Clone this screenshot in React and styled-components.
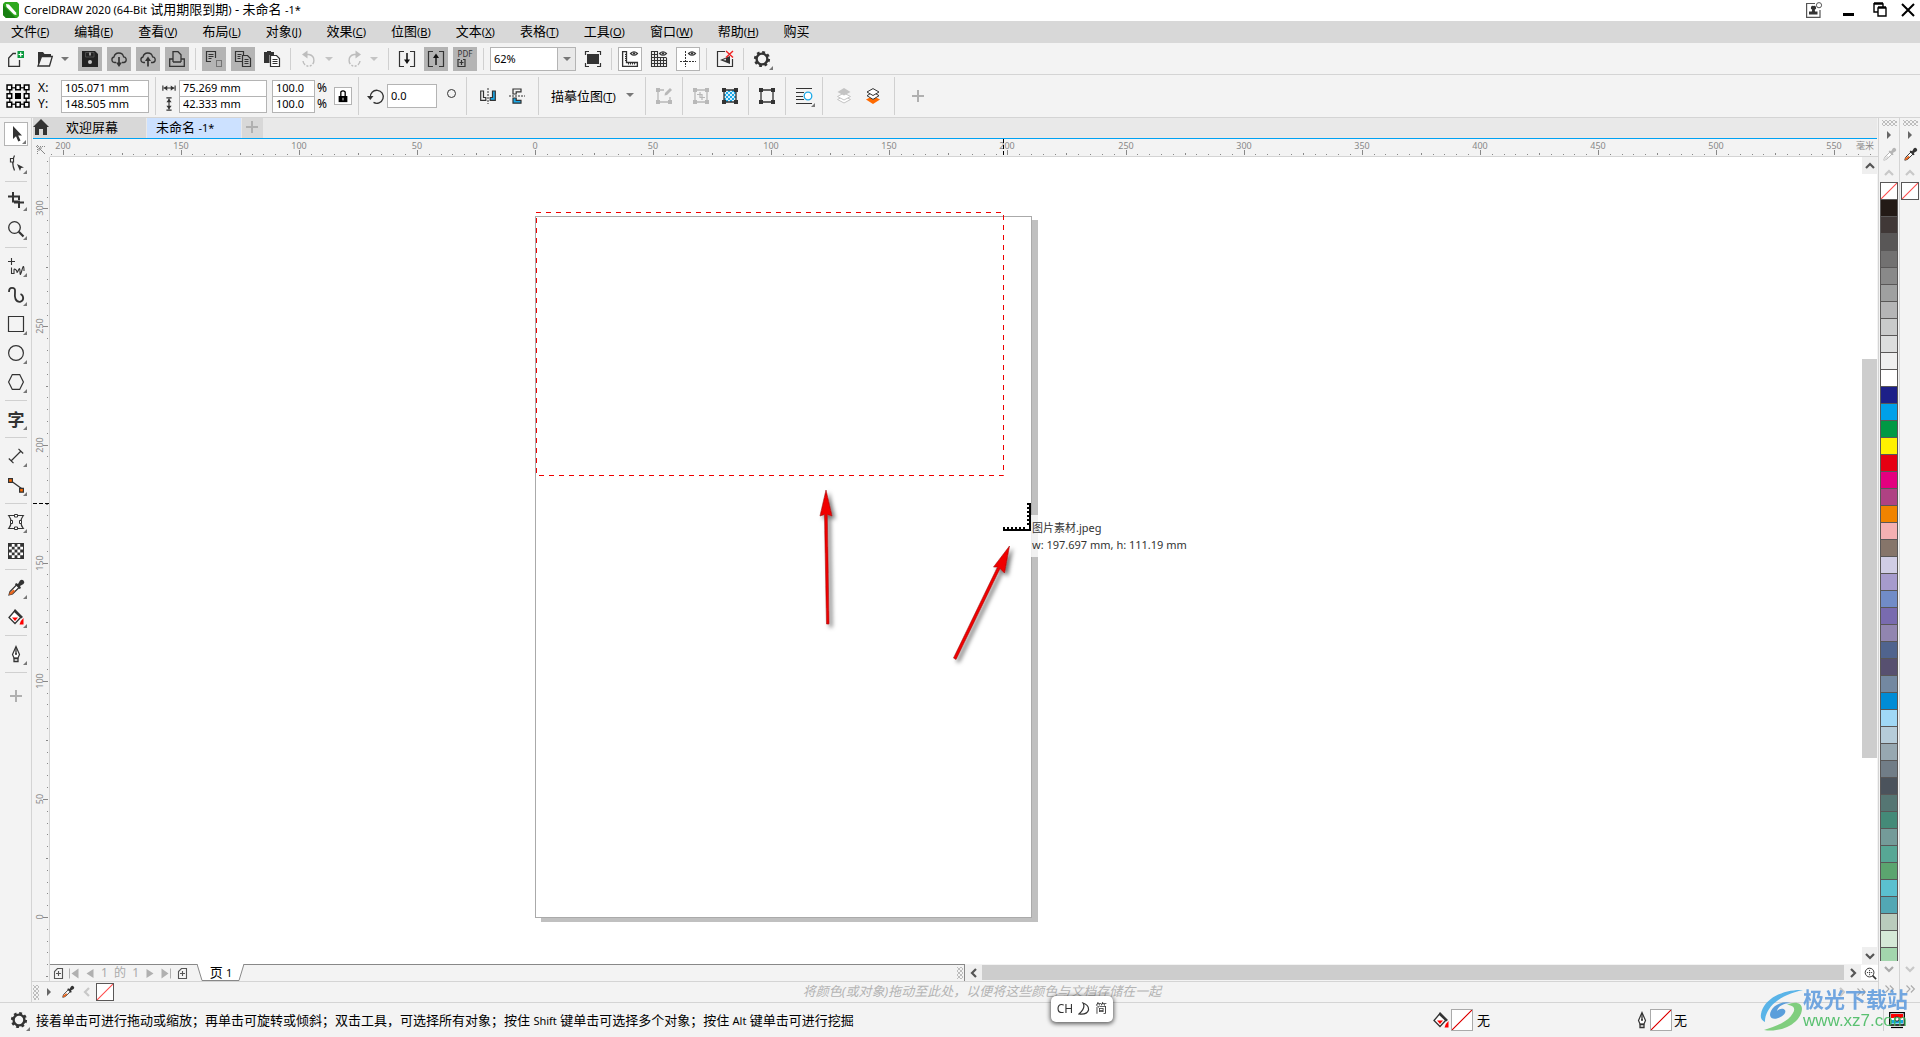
import React, {useState} from 'react';
import styled, {createGlobalStyle, css} from 'styled-components';

const GlobalStyle = createGlobalStyle`
    * { box-sizing: border-box; }
    body { margin: 0; overflow: hidden; }
    body, button, input, select {
        font-family: "Noto Sans", "Noto Sans CJK SC", sans-serif;
        font-size: 13px;
        color: #000;
    }
    button { padding: 0; border: 0; background: none; }
    svg { display: block; flex: none; }
`;

const LINE = '#d4d4d4';
const INK = '#333';
const SCALE = 2.3622; // screen pixels for one millimetre

/* ---------- icons ---------- */

const S = (props) => <g fill="none" stroke={INK} strokeWidth="1.5" {...props}/>;

const box = (color) => (
    <>
        <path d="M2 2H14V14H2Z" fill="none" stroke={color} strokeWidth="1.3"/>
        <path d="M0 0H4V4H0ZM12 0H16V4H12ZM0 12H4V16H0ZM12 12H16V16H12Z" fill={color}/>
    </>
);

const cloud = <path d="M5 11.5H3.5A2.8 2.8 0 0 1 3 6A4.9 4.9 0 0 1 12.6 5.8A2.9 2.9 0 0 1 13 11.5H11" fill="none" stroke={INK} strokeWidth="1.3"/>;

const checker = (cells, size, color) => {
    const out = [];
    for (let r = 0; r < cells; r++) {
        for (let c = 0; c < cells; c++) {
            if ((r + c) % 2 === 0) out.push(`M${1 + c * size} ${1 + r * size}h${size}v${size}h-${size}z`);
        }
    }
    return <path d={out.join('')} fill={color}/>;
};

const dropper = (ink, tip) => (
    <>
        <path d="M9 4.5L2 11.5L1 15L4.5 14L11.5 7" fill="#fff" stroke={ink} strokeWidth="1.2"/>
        <path d="M5.5 9.5L1.8 12.5L1 15L3.8 14.2L7 11Z" fill={tip}/>
        <path d="M8 3L10 4L12 .5A2.4 2.4 0 0 1 15.5 4L12 6L13 8L11.5 9L7 4.5Z" fill={ink}/>
    </>
);

const gear = (
    <>
        <circle cx="8" cy="8" r="5.4" fill="none" stroke={INK} strokeWidth="2.4"/>
        <circle cx="8" cy="8" r="7" fill="none" stroke={INK} strokeWidth="2.2" strokeDasharray="2.8 2.7"/>
    </>
);

const eye = (
    <>
        <path d="M8.5 2.5Q12 -1 15.5 2.5Q12 6 8.5 2.5Z" fill="none" stroke={INK} strokeWidth="1.1"/>
        <circle cx="12" cy="2.5" r="1.2" fill={INK}/>
    </>
);

const bucket = (
    <>
        <path d="M7 1.5L13 8L7 14.5L1 8.5Z" fill="#fff" stroke={INK} strokeWidth="1.3"/>
        <path d="M7 0L15 8L13 9.5L5.5 2.5Z" fill={INK}/>
        <path d="M4 8.5H10L7 12Z" fill="#f00"/>
        <path d="M15.5 9V15.5H11.5Q12 12 15.5 9Z" fill="#f00"/>
    </>
);

const nib = (
    <>
        <path d="M8 .5L4.5 8.5L6 12H10L11.5 8.5Z" fill="#fff" stroke={INK} strokeWidth="1.2"/>
        <path d="M8 1V8M6 12.5H10V15.5H6Z" fill="none" stroke={INK} strokeWidth="1.3"/>
        <circle cx="8" cy="8" r="1" fill={INK}/>
    </>
);

const pageStack = (
    <S strokeWidth="1.2">
        <path d="M7 10.5H.5V.5H8.5V4"/>
        <path d="M7.5 4.5H12.5L15.5 7.5V15.5H7.5Z" fill="#b4b4b4"/>
        <path d="M2.5 3.5H6.5M2.5 5.5H5.5M2.5 7.5H5.5M9.5 8.5H13.5M9.5 10.5H13.5M9.5 12.5H13.5" strokeWidth="1"/>
    </S>
);

const ICONS = {
    newDoc: (
        <>
            <S strokeWidth="1.3"><path d="M8 2.5H5L.7 7V15.3H11.5V9"/></S>
            <path d="M9.5 0H16V7H9.5Z" fill="#0b9a3f"/>
            <path d="M12.7 1.2V5.8M10.5 3.5H15" stroke="#fff" strokeWidth="1.2"/>
        </>
    ),
    open: (
        <>
            <path d="M1 15V1H6L7.5 3H14V5.5H4.5Z" fill={INK}/>
            <path d="M1 15L4.5 5.5H15.3L12.5 15Z" fill="#f3f3f3" stroke={INK} strokeWidth="1.3"/>
        </>
    ),
    save: (
        <>
            <path d="M0 0H13L16 3V16H0Z" fill="#222"/>
            <path d="M3.5 1.5H12V6H3.5Z" fill="#222" stroke="#555" strokeWidth=".8"/>
            <path d="M8 1.5V4.5" stroke="#ccc" strokeWidth="1.4"/>
            <circle cx="8" cy="11" r="2" fill="#c6c6c6"/>
        </>
    ),
    cloudDown: <>{cloud}<path d="M8 6V14" stroke={INK} strokeWidth="1.7"/><path d="M5 11.5H11L8 16Z" fill={INK}/></>,
    cloudUp: <>{cloud}<path d="M8 8V15.5" stroke={INK} strokeWidth="1.7"/><path d="M5 10H11L8 5.5Z" fill={INK}/></>,
    print: <S strokeWidth="1.3"><path d="M4 11V.7H9L12 3.7V11M4 8H.7V15.3H15.3V8H12M4 11H12"/></S>,
    cut: (
        <>
            <S strokeWidth="1.2"><path d="M5 10.5H.5V.5H9.5V7"/></S>
            <path d="M2.5 3.5H7.5M2.5 5.5H7.5M2.5 7.5H5.5" stroke={INK}/>
            <path d="M10.5 9.5H15.5V15.5H10.5Z" fill="none" stroke={INK} strokeDasharray="1 1"/>
        </>
    ),
    copy: pageStack,
    paste: (
        <>
            <path d="M0 1H3V0H7V1H10V4H5.5V12H0Z" fill={INK}/>
            <S strokeWidth="1.2"><path d="M6.5 4.5H12.5L15.5 7.5V15.5H6.5Z" fill="#fff"/></S>
            <path d="M8.5 8.5H13.5M8.5 10.5H13.5M8.5 12.5H13.5" stroke={INK}/>
        </>
    ),
    undo: <><path d="M4 3.5H8A6 6 0 0 1 8 15.3A6 6 0 0 1 2 10" fill="none" stroke="#bdbdbd" strokeWidth="1.4" strokeDasharray="16 1.5 2 1.5 2 1.5"/><path d="M1 3.5L6.5 -.5V7.5Z" fill="#bdbdbd"/></>,
    redo: <><path d="M12 3.5H8A6 6 0 0 0 8 15.3A6 6 0 0 0 14 10" fill="none" stroke="#bdbdbd" strokeWidth="1.4" strokeDasharray="16 1.5 2 1.5 2 1.5"/><path d="M15 3.5L9.5 -.5V7.5Z" fill="#bdbdbd"/></>,
    importFile: <><S strokeWidth="1.2"><path d="M5 .5H.5V15.5H5M11 .5H15.5V15.5H11"/><path d="M8 2V10" strokeWidth="1.8"/></S><path d="M5 8.5H11L8 13Z" fill="#111"/></>,
    exportFile: <><S strokeWidth="1.2"><path d="M5 .5H.5V15.5H5M11 .5H15.5V15.5H11"/><path d="M8 6V14" strokeWidth="1.8"/></S><path d="M5 7H11L8 2.5Z" fill="#111"/></>,
    pdf: (
        <>
            <text x="8" y="6" fontSize="8" textAnchor="middle" fill={INK}>PDF</text>
            <S strokeWidth="1.2"><path d="M3 8.5H1V15.5H8V8.5H6M4.5 9V14M2.5 11.5H6.5"/></S>
        </>
    ),
    fullScreen: <><path d="M2 3H14V13H2Z" fill={INK}/><S strokeWidth="1.2"><path d="M.5 4V.5H4M12 .5H15.5V4M.5 12V15.5H4M12 15.5H15.5V12"/></S></>,
    rulers: <>{eye}<S strokeWidth="1.3"><path d="M.6 .6H4.5V11.5H15.4V15.4H.6Z"/><path d="M3 3.5H5M3 5.5H5M3 7.5H5M3 9.5H5M6.5 13.5V11.5M8.5 13.5V11.5M10.5 13.5V11.5M12.5 13.5V11.5" strokeWidth="1"/></S></>,
    grid: <>{eye}<S strokeWidth="1.1"><path d="M7 .5H.5V15.5H15.5V7M.5 3.5H7M.5 6.5H15.5M.5 9.5H15.5M.5 12.5H15.5M3.5 .5V15.5M6.5 .5V15.5M9.5 6V15.5M12.5 6V15.5"/></S></>,
    guides: <>{eye}<path d="M5.5 0V16M0 10.5H16" stroke={INK} strokeDasharray="2 1" fill="none"/></>,
    snapOff: (
        <>
            <S strokeWidth="1.2"><path d="M8 .5H.5V15.5H15.5V8"/></S>
            <path d="M13 5L3 9L13 13Z" fill={INK}/>
            <path d="M6 9L9 7.5V9.5Z" fill="#ddd"/>
            <path d="M9 0L16 6.5M16 0L9 6.5" stroke="#f02020" strokeWidth="1.4"/>
        </>
    ),
    gear,
    origin: (
        <S strokeWidth="1">
            <path d="M2.5 2.5H13.5V13.5H2.5Z"/>
            <path d="M.7 .7H3.8V3.8H.7ZM6.5 .7H9.5V3.8H6.5ZM12.2 .7H15.3V3.8H12.2ZM.7 6.5H3.8V9.5H.7ZM12.2 6.5H15.3V9.5H12.2ZM.7 12.2H3.8V15.3H.7ZM6.5 12.2H9.5V15.3H6.5ZM12.2 12.2H15.3V15.3H12.2Z" fill="#fff" stroke="#000"/>
            <path d="M6 6H10V10H6Z" fill="#000" stroke="none"/>
        </S>
    ),
    width: <><path d="M1 5V11M15 5V11M2 8H14" stroke={INK} strokeWidth="1.3"/><path d="M2 8L6 5V11ZM14 8L10 5V11Z" fill={INK}/></>,
    height: <><path d="M5 1H11M5 15H11M8 2V14" stroke={INK} strokeWidth="1.3"/><path d="M8 2L5 6H11ZM8 14L5 10H11Z" fill={INK}/></>,
    lock: <><path d="M3 8H13V15H3Z"/><path d="M5.5 8V3.5Q8 .8 10.5 3.5V8" fill="none" stroke="#000" strokeWidth="1.5"/><path d="M8 10V13" stroke="#fff"/></>,
    rotate: <><S strokeWidth="1.3"><path d="M2.3 9.5A6.5 6.5 0 1 1 5.5 14.4"/></S><path d="M-1 8H5.5L2.3 12Z" fill={INK}/></>,
    mirrorH: (
        <>
            <path d="M.7 3H3.5V9.5H5.8V12.3H.7Z" fill="none" stroke={INK} strokeWidth="1.2"/>
            <path d="M15.3 3H12.5V9.5H10.2V12.3H15.3Z" fill="#1ba9e8" stroke={INK} strokeWidth="1.2"/>
            <path d="M8 0V16" stroke={INK} strokeDasharray="2 1"/>
        </>
    ),
    mirrorV: (
        <>
            <path d="M4 6V1H12V3.8H7.2V6Z" fill="none" stroke={INK} strokeWidth="1.2"/>
            <path d="M4 10V15.2H12V12.4H7.2V10Z" fill="#1ba9e8" stroke={INK} strokeWidth="1.2"/>
            <path d="M0 8H16" stroke={INK} strokeDasharray="2 1"/>
        </>
    ),
    editBitmap: <><path d="M8 2H2V14H14V9" fill="none" stroke="#b8b8b8" strokeWidth="1.3"/><path d="M0 0H4V4H0ZM0 12H4V16H0ZM12 12H16V16H12Z" fill="#b8b8b8"/><path d="M14 0L16 2L11 7L8.5 7.5L9 5Z" fill="#b8b8b8"/></>,
    cropBitmap: <>{box('#b8b8b8')}<path d="M7 4V9.5H12M4 6.5H9V12" fill="none" stroke="#b8b8b8" strokeWidth="1.2"/></>,
    fillBox: (
        <>
            <path d="M2 2H14V14H2Z" fill="#d8f0fc"/>
            <g transform="translate(1 1)">{checker(6, 2, '#1ba9e8')}</g>
            {box(INK)}
        </>
    ),
    wrapBox: <>{box(INK)}</>,
    textWrap: <><path d="M0 .5H16M0 4.5H8M0 8.5H7M0 11.5H8M0 15.5H16" stroke={INK} strokeWidth="1.2"/><circle cx="12" cy="8" r="3.8" fill="#fff" stroke="#1ba9e8" strokeWidth="1.3"/></>,
    toFront: <><path d="M8 8L1.5 11.5L8 15L14.5 11.5Z" fill="#fff" stroke="#c4c4c4"/><path d="M8 5L1.5 8.5L8 12L14.5 8.5Z" fill="#fff" stroke="#c4c4c4"/><path d="M8 0L1.5 4L8 7.5L14.5 4Z" fill="#c4c4c4"/></>,
    toBack: <><path d="M8 8L1 11.5L8 16L15 11.5Z" fill="#ff6a00"/><path d="M8 4L2 7.7L8 11.4L14 7.7Z" fill="#fff" stroke={INK}/><path d="M8 .6L2 4L8 7.5L14 4Z" fill="#fff" stroke={INK}/></>,
    plus: <path d="M8 2V14M2 8H14" stroke="#b0b0b0" strokeWidth="2"/>,
    pick: <path d="M5 0V13L8 10.2L10.3 15.5L12.5 14.5L10.2 9.5H14Z" fill={INK}/>,
    shape: (
        <>
            <S><path d="M6.5 .5Q3 7 6.5 15.5" strokeWidth="1.2"/><path d="M2.5 3.5H5.5V7H2.5Z" fill="#fff" strokeWidth="1.2"/></S>
            <path d="M9 9L16 12.5L13 13L12 16Z" fill={INK}/>
        </>
    ),
    crop: <S strokeWidth="2"><path d="M5 0V9.5H11V16M0 4.5H11V8M6 10.5H16"/></S>,
    zoom: <><circle cx="6.5" cy="6.5" r="5.8" fill="none" stroke={INK} strokeWidth="1.3"/><path d="M10.8 10.8L15.5 15.5" stroke={INK} strokeWidth="2.2"/></>,
    freehand: <S strokeWidth="1"><path d="M3.5 0V7M0 3.5H7M3.5 9.5V15.5H6V12Q6 10.5 7.5 11.5T9 14T10.5 12T12 14T14 12T16 13" strokeWidth="1.1"/></S>,
    artistic: <S strokeWidth="1.8"><path d="M1 5Q1 .8 4 .8Q7.5 .8 7 5T7.5 12Q9 15 12 14.8Q15.2 14 15.2 11Q15 8 12.5 7"/></S>,
    rect: <S strokeWidth="1.2"><path d="M.5 .5H15.5V15.5H.5Z"/></S>,
    ellipse: <S strokeWidth="1.2"><circle cx="8" cy="8" r="7.4"/></S>,
    polygon: <S strokeWidth="1.2"><path d="M4.3 .6H11.7L15.4 8L11.7 15.4H4.3L.6 8Z"/></S>,
    line: <S strokeWidth="1.2"><path d="M3 13L13 3M.8 10.5L5.5 15.2M10.5 .8L15.2 5.5"/></S>,
    connector: <><path d="M2.5 3.5L13.5 11.5" stroke={INK} strokeWidth="1.2"/><path d="M.6 1.6H4.4V5.4H.6ZM11.6 11.4H15.4V15.2H11.6Z" fill="#ff6a00" stroke={INK} strokeWidth="1.2"/></>,
    envelope: (
        <S strokeWidth="1.2">
            <path d="M.7 1.5H15.3Q10.5 8 15.3 14.5H.7Q5.5 8 .7 1.5Z"/>
            <path d="M6.5 .5H9.5V3H6.5ZM6.5 13H9.5V15.5H6.5ZM2.5 6.5H4.5V9.5H2.5ZM11.5 6.5H13.5V9.5H11.5Z" fill="#fff" strokeWidth="1"/>
        </S>
    ),
    transparency: <><path d="M0 0H16V16H0Z" fill={INK}/><path d="M1 1H15V15H1Z" fill="#fff"/>{checker(5, 2.8, INK)}</>,
    dropper: dropper(INK, '#e8641b'),
    dropperOff: dropper('#b5b5b5', '#ddd'),
    bucket,
    nib,
    home: <path d="M8 0L16 8H14V16H10V10H6V16H2V8H0Z" fill={INK}/>,
    user: (
        <>
            <S strokeWidth="1.2" stroke="#555"><path d="M9 1.5H.6V15.4H14V8"/><circle cx="13" cy="3.2" r="2.6" strokeWidth="1"/></S>
            <path d="M7.5 4A2 2 0 0 1 8.8 7.8L9 9.5H11.5V12.5H3V9.5H5.8L6.2 7.8A2 2 0 0 1 7.5 4Z" fill={INK}/>
        </>
    ),
    minimize: <path d="M3 11H14V14H3Z"/>,
    restore: <path d="M2 2H11V5M2 1V10H6M6 6H14V14H6ZM6 5H14M2 1H11" fill="none" stroke="#000" strokeWidth="1.4"/>,
    close: <path d="M2 2L14 14M14 2L2 14" stroke="#000" strokeWidth="2"/>,
    addPage: <S strokeWidth="1.1" stroke="#555"><path d="M7.5 3.5H12.5V13.5H4.5V6.5ZM8.5 6V11M6 8.5H11"/></S>,
    first: <path d="M3 3.5H4V13.5H3ZM12.5 3.5V13.5L5.5 8.5Z" fill="#b0b0b0"/>,
    last: <path d="M13 3.5H12V13.5H13ZM3.5 3.5V13.5L10.5 8.5Z" fill="#b0b0b0"/>,
    prev: <path d="M11.5 4V13L4.5 8.5Z" fill="#b0b0b0"/>,
    next: <path d="M4.5 4V13L11.5 8.5Z" fill="#b0b0b0"/>,
    play: <path d="M6 4L10 8L6 12Z" fill="#666"/>,
    more: <path d="M4 4L8 8L4 12M9 4L13 8L9 12" fill="none" stroke="#aaa" strokeWidth="1.3"/>,
    lens: <S strokeWidth="1.1"><circle cx="7.5" cy="7.5" r="5"/><path d="M11 11L15 15" strokeWidth="1.8"/><path d="M7.5 4.5V10.5M4.5 7.5H10.5" strokeDasharray="1.4 1"/></S>,
    corner: <S strokeWidth="1" stroke="#888"><path d="M4.5 4V14M3 5.5H13" strokeDasharray="1 1"/><path d="M6 7L12 13M6 10V7H9"/></S>,
    monitor: (
        <>
            <path d="M.7 .7H15.3V13H.7Z" fill="#fff" stroke="#000" strokeWidth="1.3"/>
            <path d="M2 2H14V6H2Z" fill="#f00"/>
            <path d="M2 8H14V11.5H2Z" fill="#19a7e0"/>
            <circle cx="8" cy="7" r="2.2" fill="#fff" stroke="#222" strokeWidth="1"/>
            <path d="M2 15.5H14" stroke="#000" strokeWidth="1.2"/>
        </>
    ),
};

const Icon = ({name, size = 16}) => (
    <svg width={size} height={size} viewBox="0 0 16 16" aria-hidden="true" overflow="visible">{ICONS[name]}</svg>
);

const turns = {right: 0, down: 90, left: 180, up: 270};

const Chevron = ({dir, color = '#555'}) => (
    <svg width="10" height="10" viewBox="0 0 10 10" aria-hidden="true">
        <path d="M3 1L7 5L3 9" fill="none" stroke={color} strokeWidth="2.2" transform={`rotate(${turns[dir]} 5 5)`}/>
    </svg>
);

const Logo = () => (
    <svg width="16" height="16" viewBox="0 0 16 16" aria-hidden="true">
        <path d="M2 0H14L16 2V14L14 16H3L0 13V2Z" fill="#2fa81f"/>
        <path d="M0 3V13L3 16H13Z" fill="#187f12"/>
        <path d="M3 2L6 2.5L13 10.5L13.5 13L11 12.5L3.5 5Z" fill="#fff"/>
    </svg>
);

/* ---------- shared parts ---------- */

const Shell = styled.div`
    height: 100vh;
    display: flex;
    flex-direction: column;
    background: #f3f3f3;
    line-height: 18px;
`;

const TitleBar = styled.header`
    height: 21px;
    flex: none;
    padding: 0 4px 2px 3px;
    display: flex;
    align-items: center;
    gap: 5px;
    background: #fff;
`;

const Title = styled.h1`
    margin: 0;
    flex: 1;
    font-size: 13px;
    font-weight: 400;
    white-space: nowrap;
`;

const Latin = styled.span`
    font-size: 11px;
`;

const WindowButtons = styled.div`
    display: flex;
    gap: 16px;
    button:first-child { margin-right: 2px; }
    button:last-child { margin-left: -4px; }
`;

const MenuBar = styled.nav`
    height: 22px;
    flex: none;
    display: flex;
    background: #d8d8d8;
    button { padding: 0 14px 3px 11px; white-space: nowrap; }
    span { font-size: 11px; }
`;

const Bar = styled.div`
    height: ${p => p.$tall ? 43 : 32}px;
    flex: none;
    padding: 0 4px;
    display: flex;
    align-items: center;
    gap: 5px;
    border-bottom: 1px solid ${LINE};
`;

const Sep = styled.i`
    width: 1px;
    height: ${p => p.$tall ? 38 : 22}px;
    margin: 0 1px;
    background: #d0d0d0;
`;

const IconButton = styled.button`
    width: 24px;
    height: 24px;
    flex: none;
    display: flex;
    align-items: center;
    justify-content: center;
    ${p => p.$state === 'dim' && css`background: #b4b4b4;`}
    ${p => p.$state === 'on' && css`background: #fff; border: 1px solid #b4b4b4;`}
    ${p => p.$flyout && css`
        position: relative;
        &::after {
            content: "";
            position: absolute;
            right: 1px;
            bottom: 1px;
            border: 2px solid transparent;
            border-right-color: #777;
            border-bottom-color: #777;
        }
    `}
`;

const DropButton = styled.button`
    width: 16px;
    height: 24px;
    margin-left: -5px;
    display: flex;
    align-items: center;
    justify-content: center;
`;

const Caret = styled.i`
    border: 4px solid transparent;
    border-top-color: ${p => p.$color || '#777'};
    border-bottom: 0;
`;

const ZoomBox = styled.label`
    position: relative;
    width: 86px;
    height: 24px;
    display: flex;
    select {
        width: 100%;
        appearance: none;
        border: 1px solid #b4b4b4;
        border-radius: 0;
        padding: 0 22px 0 3px;
        font-size: 11px;
        background: linear-gradient(90deg, #b4b4b4 1px, #e9e9e9 1px) right / 18px 100% no-repeat #fff;
    }
    i { position: absolute; right: 5px; top: 10px; }
`;

const Field = styled.input`
    width: ${p => p.$w}px;
    height: ${p => p.$h || 17}px;
    border: 1px solid #b4b4b4;
    border-radius: 0;
    padding: 0 3px 1px;
    font-size: 11px;
    background: #fff;
`;

const Pair = styled.div`
    display: grid;
    grid-template-columns: ${p => p.$cols};
    grid-template-rows: 16px 17px;
    align-items: center;
    font-size: 12px;
    line-height: 16px;
    input { align-self: start; }
`;

const OriginButton = styled(IconButton)`
    margin: 0 0 0 2px;
`;

const LockButton = styled.button`
    width: 18px;
    height: 18px;
    display: flex;
    align-items: center;
    justify-content: center;
    background: #fff;
    border: 1px solid #b4b4b4;
`;

const Rotation = styled.label`
    display: flex;
    align-items: center;
    gap: 3px;
    margin-left: 3px;
`;

const Degree = styled.span`
    width: 9px;
    height: 9px;
    margin: 0 4px 6px 7px;
    border: 1px solid #333;
    border-radius: 50%;
`;

const TraceButton = styled.button`
    height: 24px;
    padding: 0 5px 2px 6px;
    display: flex;
    align-items: center;
    gap: 10px;
    white-space: nowrap;
`;

const Group = styled.div`
    display: flex;
    gap: 5px;
    padding: 0 ${p => p.$pad}px;
`;

/* ---------- workspace ---------- */

const Workspace = styled.main`
    flex: 1;
    min-height: 0;
    display: flex;
    border-bottom: 1px solid ${LINE};
`;

const Toolbox = styled.div`
    width: 32px;
    flex: none;
    padding: 4px 3px 0 4px;
    display: flex;
    flex-direction: column;
    gap: 5px;
    border-right: 1px solid ${LINE};
    hr {
        width: 22px;
        height: 1px;
        margin: 1px;
        border: 0;
        background: #d0d0d0;
    }
    button:last-child { margin-top: 5px; }
`;

const TextTool = styled.span`
    padding-bottom: 2px;
    font-size: 17px;
    font-weight: 700;
    color: ${INK};
`;

const Editor = styled.section`
    flex: 1;
    min-width: 0;
    display: flex;
    flex-direction: column;
`;

const TabStrip = styled.div`
    height: 21px;
    flex: none;
    margin: 0 1px;
    display: flex;
    gap: 1px;
    background: #e9e9e9;
    border-bottom: 1px solid #00a2f3;
`;

const Tab = styled.button`
    width: ${p => p.$w}px;
    padding: 0 0 3px ${p => p.$pad}px;
    display: flex;
    align-items: center;
    gap: 17px;
    background: ${p => p.$active ? '#cce1ff' : '#d8d8d8'};
    white-space: nowrap;
`;

const RulerRow = styled.div`
    height: 18px;
    flex: none;
    display: flex;
`;

const RulerCorner = styled.button`
    width: 18px;
    flex: none;
    padding: 2px 0 0 1px;
`;

const Ruler = styled.svg`
    ${p => p.$vertical
        ? css`width: 18px; border-right: 1px solid ${LINE};`
        : css`flex: 1; min-width: 0; height: 18px; border-bottom: 1px solid ${LINE};`}
    text {
        font-family: "Noto Sans", "Noto Sans CJK SC", sans-serif;
        font-size: 9px;
        fill: #888;
        text-anchor: middle;
    }
`;

const EditorBody = styled.div`
    flex: 1;
    min-height: 0;
    display: flex;
`;

const CanvasColumn = styled.div`
    flex: 1;
    min-width: 0;
    display: flex;
    flex-direction: column;
`;

const CanvasRow = styled.div`
    flex: 1;
    min-height: 0;
    display: flex;
    background: #fff;
`;

const Canvas = styled.div`
    position: relative;
    flex: 1;
    overflow: hidden;
    background: #fff;
`;

const Page = styled.div`
    position: absolute;
    left: 485px;
    top: 59px;
    width: 497px;
    height: 702px;
    border: 1px solid #aaa;
    background: #fff;
    box-shadow: 6px 4px 0 #c0c0c0;
`;

const CanvasDrawing = styled.svg`
    position: absolute;
    inset: 0;
    width: 100%;
    height: 100%;
`;

const PlaceHint = styled.div`
    position: absolute;
    left: 981px;
    top: 358px;
    height: 42px;
    padding: 4px 0 0 1px;
    background: rgba(255, 255, 255, .78);
    color: #333;
    font-size: 11px;
    line-height: 17px;
    white-space: nowrap;
`;

const VScroll = styled.div`
    width: 16px;
    flex: none;
    display: flex;
    flex-direction: column;
    background: #fff;
    border-right: 1px solid #f3f3f3;
`;

const ScrollButton = styled.button`
    width: ${p => p.$w || 15}px;
    height: 17px;
    flex: none;
    display: flex;
    align-items: center;
    justify-content: center;
    background: ${p => p.$bg || '#efefef'};
`;

const Track = styled.div`
    flex: 1;
    display: flex;
    flex-direction: column;
    &::before { content: ""; flex: 185; }
    &::after { content: ""; flex: 189; }
    i { flex: 399; background: #cdcdcd; }
`;

const NavRow = styled.div`
    height: 17px;
    flex: none;
    display: flex;
`;

const PageNav = styled.div`
    flex: 1;
    min-width: 0;
    display: flex;
    align-items: center;
    padding-right: 1px;
    border-top: 1px solid #888;
    border-right: 1px solid #888;
`;

const PageCount = styled.span`
    width: 44px;
    text-align: center;
    white-space: nowrap;
    color: #aaa;
    font-size: 12px;
    line-height: 16px;
    word-spacing: normal;
`;

const PageTab = styled.button`
    position: relative;
    width: 48px;
    height: 17px;
    flex: none;
    margin: -1px 0 0 7px;
    svg { position: absolute; inset: 0; }
    > span { position: relative; display: block; line-height: 15px; white-space: nowrap; }
`;

const Grip = styled.i`
    width: ${p => p.$w}px;
    height: ${p => p.$h}px;
    flex: none;
    margin: ${p => p.$m || '0'};
    background:
        radial-gradient(circle, #bbb 0 .7px, transparent 1px) 0 0 / 4px 4px,
        radial-gradient(circle, #bbb 0 .7px, transparent 1px) 2px 2px / 4px 4px;
`;

const HScroll = styled.div`
    flex: 1;
    min-width: 0;
    display: flex;
    padding-top: 1px;
    i { flex: 1; height: 15px; background: #cdcdcd; }
    button { height: 15px; }
`;

const DocPalette = styled.div`
    height: 21px;
    flex: none;
    display: flex;
    align-items: center;
    padding: 0 8px 0 1px;
    border-top: 1px solid ${LINE};
`;

const DocHint = styled.em`
    flex: 1;
    padding: 0 0 2px 18px;
    text-align: center;
    color: #b4b4b4;
    white-space: nowrap;
`;

const NoColor = styled.button`
    width: ${p => p.$size}px;
    height: ${p => p.$size}px;
    flex: none;
    border: 1px solid ${p => p.$edge || '#595757'};
    background: linear-gradient(to bottom right, transparent calc(50% - 1px), ${p => p.$edge ? '#d00' : '#f55'} 50%, transparent calc(50% + 1px)) #fff;
`;

const Palette = styled.aside`
    width: 21px;
    flex: none;
    display: flex;
    flex-direction: column;
    align-items: center;
    border-left: 1px solid ${LINE};
`;

const PaletteButton = styled.button`
    width: 19px;
    height: ${p => p.$h}px;
    flex: none;
    display: flex;
    align-items: center;
    justify-content: center;
`;

const Swatches = styled.div`
    flex: 1;
    min-height: 0;
    width: 18px;
    overflow: hidden;
    border: ${p => p.$empty ? 0 : '0 solid #595757'};
    border-width: 0 1px;
`;

const Swatch = styled.button`
    display: block;
    width: 16px;
    height: 17px;
    border-bottom: 1px solid #595757;
    background: ${p => p.$color};
`;

/* ---------- status bar ---------- */

const StatusBar = styled.footer`
    height: 34px;
    flex: none;
    padding: 0 11px 0 7px;
    display: flex;
    align-items: center;
    white-space: nowrap;
    p { margin: 0 0 0 5px; flex: 1; }
`;

const StatusColor = styled.div`
    width: ${p => p.$w}px;
    display: flex;
    align-items: center;
    gap: ${p => p.$gap}px;
    span { margin-left: 2px; }
`;

const ImeBadge = styled.div`
    position: fixed;
    left: 1051px;
    bottom: 15px;
    width: 62px;
    height: 26px;
    display: flex;
    align-items: center;
    justify-content: center;
    gap: 5px;
    border-radius: 5px;
    background: #fff;
    box-shadow: 0 1px 4px 1px rgba(0, 0, 0, .6);
    color: #333;
    font-size: 12px;
`;

const SiteMark = styled.div`
    position: fixed;
    right: 10px;
    bottom: 6px;
    display: flex;
    align-items: center;
    pointer-events: none;
    opacity: .85;
    font-family: "Liberation Sans", "Noto Sans CJK SC", sans-serif;
    div { width: 107px; white-space: nowrap; }
    b {
        display: block;
        font-size: 21px;
        line-height: 22px;
        font-weight: 700;
        color: #5a98dc;
    }
    span {
        display: block;
        font-size: 17px;
        font-weight: 400;
        line-height: 20px;
        color: #3fb85a;
    }
`;

const menus = [
    ['文件', 'F'], ['编辑', 'E'], ['查看', 'V'], ['布局', 'L'], ['对象', 'J'], ['效果', 'C'], ['位图', 'B'],
    ['文本', 'X'], ['表格', 'T'], ['工具', 'O'], ['窗口', 'W'], ['帮助', 'H'], ['购买'],
];

const tools = [
    ['pick', 1], ['shape', 1], null, ['crop', 1], ['zoom', 1], null, ['freehand', 1], ['artistic', 1],
    ['rect', 1], ['ellipse', 1], ['polygon', 1], null, ['text', 1], null, ['line', 1], ['connector', 1], null,
    ['envelope', 1], ['transparency', 0], null, ['dropper', 1], ['bucket', 1], null, ['nib', 1], null, ['plus', 0],
];

const colors = [
    '#231a16', '#403837', '#595757', '#727171', '#898989', '#9fa0a0', '#b5b5b6', '#c9caca', '#dcdddd',
    '#efefef', '#fff', '#1d2088', '#00a0e9', '#009944', '#fff100', '#e60012', '#e4007f', '#af4283',
    '#f08300', '#f4b0b2', '#86756a', '#d0cde5', '#a69bcd', '#718cc7', '#796baf', '#9185b0', '#50648e',
    '#575070', '#7388a1', '#008cd6', '#a0d8f6', '#b6ccd9', '#97a8b1', '#717d87', '#4b535c', '#557673',
    '#448a78', '#749b99', '#57a795', '#5ba56f', '#5bc0cf', '#52a7b4', '#b9cbbc', '#d5e9d7', '#a3d6ad',
];

const Tool = ({name, ...rest}) => (
    <IconButton type="button" aria-label={name} {...rest}><Icon name={name}/></IconButton>
);

const HorizontalRuler = () => {
    const marks = [];
    for (let mm = -205; mm <= 565; mm += 5) {
        const x = Math.round(485 + mm * SCALE);
        const h = mm % 50 === 0 ? 5 : mm % 25 === 0 ? 2 : 1;
        marks.push(<rect key={mm} x={x} y={16 - h} width="1" height={h} fill="#888"/>);
        if (mm % 50 === 0) marks.push(<text key={`t${mm}`} x={x} y="10">{Math.abs(mm)}</text>);
    }
    return (
        <Ruler>
            {marks}
            <path d="M953.5 0V17" stroke="#000" strokeDasharray="4 2"/>
            <svg x="100%" overflow="visible"><text x="-13" y="10">毫米</text></svg>
        </Ruler>
    );
};

const VerticalRuler = () => {
    const marks = [];
    for (let mm = 320; mm >= -25; mm -= 5) {
        const y = Math.round(760 - mm * SCALE);
        const w = mm % 50 === 0 ? 5 : mm % 25 === 0 ? 2 : 1;
        marks.push(<rect key={mm} x={16 - w} y={y} width={w} height="1" fill="#888"/>);
        if (mm % 50 === 0) marks.push(<text key={`t${mm}`} transform={`translate(11 ${y}) rotate(-90)`}>{mm}</text>);
    }
    return (
        <Ruler $vertical>
            {marks}
            <path d="M1 346.5H17" stroke="#000" strokeDasharray="4 2"/>
        </Ruler>
    );
};

const cursorTeeth = Array.from({length: 6}, (_, i) => `M${953 + i * 4} 370h2v3h-2zM977 ${346 + i * 4}h2v2h-2z`).join('');

const PaletteColumn = ({list, off}) => (
    <Palette>
        <Grip $w={15} $h={6} $m="2px 0 0"/>
        <PaletteButton type="button" aria-label="菜单" $h={18}><Icon name="play"/></PaletteButton>
        <PaletteButton type="button" aria-label="滴管" $h={20}><Icon name={off ? 'dropperOff' : 'dropper'} size={13}/></PaletteButton>
        <PaletteButton type="button" aria-label="向上" $h={18}><Chevron dir="up" color="#c8c8c8"/></PaletteButton>
        <NoColor type="button" aria-label="无" $size={18}/>
        <Swatches $empty={!list}>
            {list && list.map(c => <Swatch key={c} type="button" aria-label={c} $color={c}/>)}
        </Swatches>
        <PaletteButton type="button" aria-label="向下" $h={15}><Chevron dir="down" color={off ? '#aaa' : '#c8c8c8'}/></PaletteButton>
        <PaletteButton type="button" aria-label="展开" $h={26}><Icon name="more" size={14}/></PaletteButton>
    </Palette>
);

const App = () => {
    const [zoom, setZoom] = useState('62%');
    const [tool, setTool] = useState('pick');

    return (
        <Shell>
            <GlobalStyle/>
            <TitleBar>
                <Logo/>
                <Title>
                    <Latin>CorelDRAW 2020 (64-Bit</Latin> 试用期限到期<Latin>)</Latin> - 未命名 <Latin>-1*</Latin>
                </Title>
                <WindowButtons>
                    {['user', 'minimize', 'restore', 'close'].map(n => (
                        <button key={n} type="button" aria-label={n}><Icon name={n}/></button>
                    ))}
                </WindowButtons>
            </TitleBar>

            <MenuBar>
                {menus.map(([label, key]) => (
                    <button key={label} type="button">{label}{key && <span>(<u>{key}</u>)</span>}</button>
                ))}
            </MenuBar>

            <Bar>
                <Tool name="newDoc"/>
                <Tool name="open"/>
                <DropButton type="button" aria-label="最近"><Caret/></DropButton>
                <Tool name="save" $state="dim"/>
                <Tool name="cloudDown" $state="dim"/>
                <Tool name="cloudUp" $state="dim"/>
                <Tool name="print" $state="dim"/>
                <Sep/>
                <Tool name="cut" $state="dim"/>
                <Tool name="copy" $state="dim"/>
                <Tool name="paste"/>
                <Sep/>
                <Tool name="undo"/>
                <DropButton type="button" aria-label="撤消列表"><Caret $color="#c4c4c4"/></DropButton>
                <Tool name="redo"/>
                <DropButton type="button" aria-label="重做列表"><Caret $color="#c4c4c4"/></DropButton>
                <Sep/>
                <Tool name="importFile"/>
                <Tool name="exportFile" $state="dim"/>
                <Tool name="pdf" $state="dim"/>
                <Sep/>
                <ZoomBox>
                    <select aria-label="缩放级别" value={zoom} onChange={e => setZoom(e.target.value)}>
                        <option>62%</option>
                        <option>100%</option>
                        <option>200%</option>
                    </select>
                    <Caret/>
                </ZoomBox>
                <Tool name="fullScreen"/>
                <Sep/>
                <Tool name="rulers" $state="on"/>
                <Tool name="grid"/>
                <Tool name="guides" $state="on"/>
                <Sep/>
                <Tool name="snapOff"/>
                <Sep/>
                <Tool name="gear" $flyout/>
            </Bar>

            <Bar $tall>
                <OriginButton type="button" aria-label="对象原点"><Icon name="origin" size={24}/></OriginButton>
                <Pair $cols="26px 88px">
                    <label htmlFor="pos-x">&nbsp;X:</label><Field id="pos-x" $w={88} defaultValue="105.071 mm"/>
                    <label htmlFor="pos-y">&nbsp;Y:</label><Field id="pos-y" $w={88} defaultValue="148.505 mm"/>
                </Pair>
                <Sep $tall/>
                <Pair $cols="17px 93px 45px 12px">
                    <label htmlFor="obj-w" aria-label="宽"><Icon name="width" size={14}/></label>
                    <Field id="obj-w" $w={88} defaultValue="75.269 mm"/>
                    <Field id="scale-x" $w={43} defaultValue="100.0"/>
                    <label htmlFor="scale-x">%</label>
                    <label htmlFor="obj-h" aria-label="高"><Icon name="height" size={14}/></label>
                    <Field id="obj-h" $w={88} defaultValue="42.333 mm"/>
                    <Field id="scale-y" $w={43} defaultValue="100.0"/>
                    <label htmlFor="scale-y">%</label>
                </Pair>
                <LockButton type="button" aria-label="锁定比率"><Icon name="lock" size={14}/></LockButton>
                <Sep $tall/>
                <Rotation>
                    <Icon name="rotate"/>
                    <Field aria-label="旋转角度" $w={50} $h={24} defaultValue="0.0"/>
                    <Degree/>
                </Rotation>
                <Sep $tall/>
                <Group $pad={3}>
                    <Tool name="mirrorH"/>
                    <Tool name="mirrorV"/>
                </Group>
                <Sep $tall/>
                <TraceButton type="button"><span>描摹位图<Latin>(<u>T</u>)</Latin></span><Caret/></TraceButton>
                <Sep $tall/>
                <Tool name="editBitmap"/>
                <Sep $tall/>
                <Tool name="cropBitmap"/>
                <Tool name="fillBox"/>
                <Sep $tall/>
                <Tool name="wrapBox"/>
                <Sep $tall/>
                <Tool name="textWrap" $flyout/>
                <Sep $tall/>
                <Group $pad={3}>
                    <Tool name="toFront"/>
                    <Tool name="toBack"/>
                </Group>
                <Sep $tall/>
                <Group $pad={5}><Tool name="plus"/></Group>
            </Bar>

            <Workspace>
                <Toolbox>
                    {tools.map((t, i) => t
                        ? (
                            <IconButton key={t[0]} type="button" aria-label={t[0]} $flyout={!!t[1]}
                                        $state={tool === t[0] ? 'on' : undefined} onClick={() => setTool(t[0])}>
                                {t[0] === 'text' ? <TextTool>字</TextTool> : <Icon name={t[0]}/>}
                            </IconButton>
                        )
                        : <hr key={i}/>
                    )}
                </Toolbox>

                <Editor>
                    <TabStrip>
                        <Tab type="button" $w={113} $pad={0}><Icon name="home"/>欢迎屏幕</Tab>
                        <Tab type="button" $w={94} $pad={9} $active><span>未命名 <Latin>-1*</Latin></span></Tab>
                        <Tab type="button" $w={21} $pad={2} aria-label="新建"><Icon name="plus"/></Tab>
                    </TabStrip>
                    <RulerRow>
                        <RulerCorner type="button" aria-label="标尺原点"><Icon name="corner"/></RulerCorner>
                        <HorizontalRuler/>
                    </RulerRow>
                    <EditorBody>
                        <VerticalRuler/>
                        <CanvasColumn>
                            <CanvasRow>
                                <Canvas>
                                    <Page/>
                                    <CanvasDrawing>
                                        <defs>
                                            <filter id="soft" x="-50%" y="-50%" width="200%" height="200%">
                                                <feDropShadow dx="3" dy="3" stdDeviation="2" floodOpacity=".55"/>
                                            </filter>
                                        </defs>
                                        <path d="M486 55.5H953.5V318.5H486.5V55.5" fill="none" stroke="#f00000" strokeDasharray="5 5"/>
                                        <path d={`M953 372H981V374H953ZM979 346H981V374H979Z${cursorTeeth}`}/>
                                        <g fill="#f00000" stroke="#a01010" strokeWidth=".6" filter="url(#soft)">
                                            <path d="M776 333L770 359L774.5 357.5L776.5 467H779L777.3 357.5L782 359Z"/>
                                            <path d="M959.5 389L943.5 410L947.5 410L903.5 501L906 502.5L950 411.5L954.5 416Z"/>
                                        </g>
                                    </CanvasDrawing>
                                    <PlaceHint>图片素材.jpeg<br/>w: 197.697 mm, h: 111.19 mm</PlaceHint>
                                </Canvas>
                                <VScroll>
                                    <ScrollButton type="button" aria-label="向上滚动"><Chevron dir="up"/></ScrollButton>
                                    <Track><i/></Track>
                                    <ScrollButton type="button" aria-label="向下滚动"><Chevron dir="down"/></ScrollButton>
                                </VScroll>
                            </CanvasRow>
                            <NavRow>
                                <PageNav>
                                    {['addPage', 'first', 'prev'].map((n, i) => (
                                        <button key={n} type="button" aria-label={`${n}-${i}`}><Icon name={n}/></button>
                                    ))}
                                    <PageCount>1&nbsp; 的 &nbsp;1</PageCount>
                                    {['next', 'last', 'addPage'].map((n, i) => (
                                        <button key={n} type="button" aria-label={`${n}-${i + 3}`}><Icon name={n}/></button>
                                    ))}
                                    <PageTab type="button">
                                        <svg width="48" height="17" aria-hidden="true">
                                            <path d="M0 0L5 16.5H42L47 0" fill="#fff" stroke="#888"/>
                                        </svg>
                                        <span>页 <Latin>1</Latin></span>
                                    </PageTab>
                                    <Grip $w={6} $h={12} $m="0 0 0 auto"/>
                                </PageNav>
                                <HScroll>
                                    <ScrollButton type="button" aria-label="向左滚动" $w={17}><Chevron dir="left"/></ScrollButton>
                                    <i/>
                                    <ScrollButton type="button" aria-label="向右滚动" $w={17}><Chevron dir="right"/></ScrollButton>
                                    <ScrollButton type="button" aria-label="导航器" $w={17} $bg="#fff"><Icon name="lens" size={14}/></ScrollButton>
                                </HScroll>
                            </NavRow>
                        </CanvasColumn>
                    </EditorBody>
                    <DocPalette>
                        <Grip $w={6} $h={15}/>
                        <PaletteButton type="button" aria-label="菜单" $h={18}><Icon name="play"/></PaletteButton>
                        <PaletteButton type="button" aria-label="滴管" $h={18}><Icon name="dropper" size={12}/></PaletteButton>
                        <PaletteButton type="button" aria-label="向左" $h={18}><Chevron dir="left" color="#c8c8c8"/></PaletteButton>
                        <NoColor type="button" aria-label="无" $size={18}/>
                        <DocHint>将颜色(或对象)拖动至此处，以便将这些颜色与文档存储在一起</DocHint>
                        <PaletteButton type="button" aria-label="向右" $h={18}><Chevron dir="right" color="#c8c8c8"/></PaletteButton>
                        <PaletteButton type="button" aria-label="展开" $h={18}><Icon name="more" size={14}/></PaletteButton>
                    </DocPalette>
                </Editor>

                <PaletteColumn list={colors} off/>
                <PaletteColumn/>
            </Workspace>

            <StatusBar>
                <IconButton type="button" aria-label="选项" $flyout><Icon name="gear"/></IconButton>
                <p>接着单击可进行拖动或缩放；再单击可旋转或倾斜；双击工具，可选择所有对象；按住 <Latin>Shift</Latin> 键单击可选择多个对象；按住 <Latin>Alt</Latin> 键单击可进行挖掘</p>
                <StatusColor $w={201} $gap={2}><Icon name="bucket"/><NoColor type="button" aria-label="填充" $size={22} $edge="#aaa"/><span>无</span></StatusColor>
                <StatusColor $w={248} $gap={0}><Icon name="nib"/><NoColor type="button" aria-label="轮廓" $size={22} $edge="#aaa"/><span>无</span></StatusColor>
                <Sep/>
                <Group $pad={0}><Tool name="monitor"/></Group>
            </StatusBar>

            <ImeBadge>CH<svg width="12" height="14" viewBox="0 0 12 14" aria-hidden="true"><path d="M5 1Q8 6 1 12Q9 13 10.5 8Q11 3 5 1Z" fill="none" stroke="#333" strokeWidth="1.2"/></svg>简</ImeBadge>
            <SiteMark>
                <svg width="43" height="42" viewBox="0 0 43 42" aria-hidden="true">
                    <path d="M43 1C26 0 4 8 1 25C0 30 3 32 5 33C5 18 20 6 43 1Z" fill="#3fa9e6"/>
                    <path d="M4 41C22 44 41 34 42 20C42 13 34 12 27 16C33 16 36 19 33 24C28 33 16 37 4 41Z" fill="#6cc76a"/>
                    <path d="M31 14C20 11 10 19 10 26C11 33 22 29 25 24C27 20 21 18 17 22C18 17 24 14 31 14Z" fill="#3f8fd6"/>
                </svg>
                <div><b>极光下载站</b><span>www.xz7.com</span></div>
            </SiteMark>
        </Shell>
    );
};

export default App;
